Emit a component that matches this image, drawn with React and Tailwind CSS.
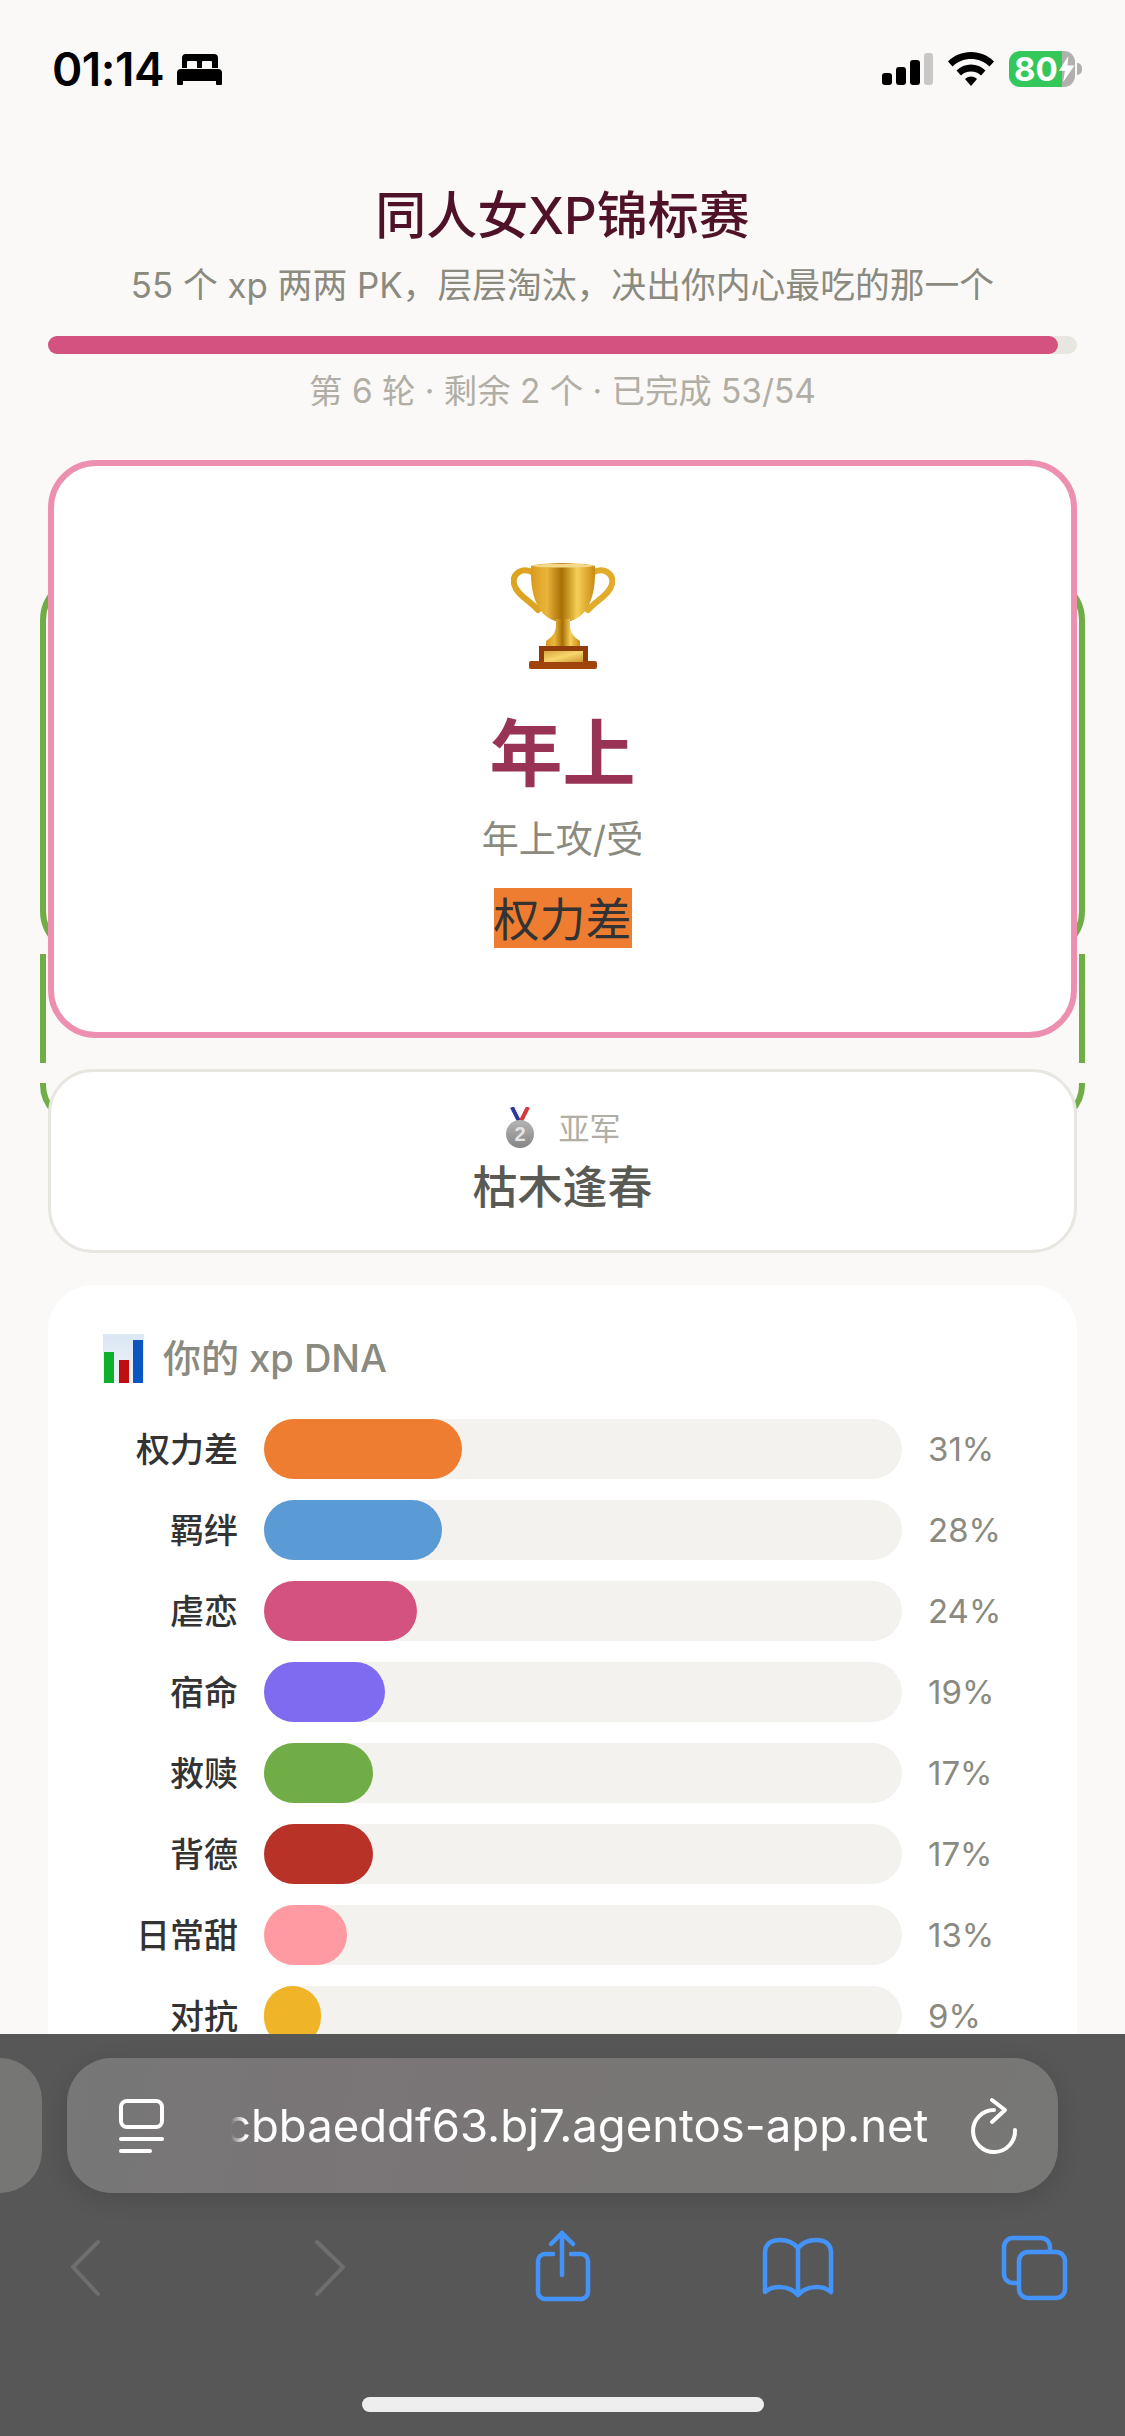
import React from 'react';

const bars = [
  { name: '权力差', pct: '31%', width: 'w-[198px]', color: 'bg-[#ef7d31]' },
  { name: '羁绊', pct: '28%', width: 'w-[178px]', color: 'bg-[#5b9bd5]' },
  { name: '虐恋', pct: '24%', width: 'w-[153px]', color: 'bg-[#d4527f]' },
  { name: '宿命', pct: '19%', width: 'w-[121px]', color: 'bg-[#7e6bf0]' },
  { name: '救赎', pct: '17%', width: 'w-[109px]', color: 'bg-[#70ad47]' },
  { name: '背德', pct: '17%', width: 'w-[109px]', color: 'bg-[#b83227]' },
  { name: '日常甜', pct: '13%', width: 'w-[83px]', color: 'bg-[#ff9aa2]' },
  { name: '对抗', pct: '9%', width: 'w-[57px]', color: 'bg-[#f0b429]' },
];

const BedIcon = () => (
  <svg width="45" height="31" viewBox="0 0 45 31" fill="#000">
    <path fillRule="evenodd" d="M8 0H37a4 4 0 0 1 4 4V14H5V4a4 4 0 0 1 3-4ZM10 8v6h10V8a1 1 0 0 0-1-1H11a1 1 0 0 0-1 1ZM25 8v6h10V8a1 1 0 0 0-1-1H26a1 1 0 0 0-1 1Z" />
    <path d="M4 15H41a4 4 0 0 1 4 4V27H0V19a4 4 0 0 1 4-4Z" />
    <rect x="0" y="26" width="6" height="5" rx="1" />
    <rect x="39" y="26" width="6" height="5" rx="1" />
  </svg>
);

const StatusIcons = () => (
  <div className="flex items-center gap-[15px]">
    <svg width="51" height="32" viewBox="0 0 51 32">
      <rect x="0" y="20" width="10" height="12" rx="3" fill="#000" />
      <rect x="14" y="14" width="10" height="18" rx="3" fill="#000" />
      <rect x="28" y="7" width="10" height="25" rx="3" fill="#000" />
      <rect x="42" y="0" width="9" height="32" rx="3" fill="#c8c8c6" />
    </svg>
    <svg width="46" height="34" viewBox="0 0 46 34">
      <path d="M23 0C14 0 6 3.500 0 9.500l4.500 5C9.500 9.500 16 7 23 7s13.500 2.500 18.500 7.500l4.500-5C40 3.500 32 0 23 0Z" fill="#000" />
      <path d="M23 12.500c-5.500 0-10.500 2-14.500 6l4.500 5c2.500-2.500 6-4 10-4s7.500 1.500 10 4l4.500-5c-4-4-9-6-14.500-6Z" fill="#000" />
      <path d="M23 24.500c-2.500 0-4.500 1-6 2.500l6 7 6-7c-1.500-1.500-3.500-2.500-6-2.500Z" fill="#000" />
    </svg>
    <div className="flex items-center gap-[2px]">
      <div className="flex h-[36px] w-[66px] items-center rounded-[11px] bg-[linear-gradient(90deg,#34c759_80%,#b0b0ae_80%)] pl-[5px] text-[33px] leading-none font-bold text-white">
        80
        <svg width="18" height="30" viewBox="0 0 20 30" fill="#fff">
          <path d="M12 0 1 17h7L6 30 19 11h-8Z" />
        </svg>
      </div>
      <div className="h-[12px] w-[5px] rounded-r-full bg-[#b0b0ae]" />
    </div>
  </div>
);

const Trophy = () => (
  <svg width="104" height="106" viewBox="0 0 104 106" fill="none">
    <defs>
      <linearGradient id="cup" x1="0" x2="1" y1="0" y2="0">
        <stop offset="0" stopColor="#d99a1c" />
        <stop offset="0.25" stopColor="#e9b53c" />
        <stop offset="0.48" stopColor="#a86e04" />
        <stop offset="0.72" stopColor="#f6cf56" />
        <stop offset="1" stopColor="#c98a12" />
      </linearGradient>
      <linearGradient id="plate" x1="0" x2="1" y1="0" y2="1">
        <stop offset="0" stopColor="#d8a53f" />
        <stop offset="0.5" stopColor="#f8d76d" />
        <stop offset="1" stopColor="#c99432" />
      </linearGradient>
    </defs>
    <path d="M23 10C11 3 1 11 3 21 5 31 18 37 27 47" stroke="#dca421" strokeWidth="6" strokeLinecap="round" />
    <path d="M81 10C93 3 103 11 101 21 99 31 86 37 77 47" stroke="#e2ab2a" strokeWidth="6" strokeLinecap="round" />
    <path d="M20 3C30-1 74-1 84 3 85 32 78 52 60 58H44C26 52 19 32 20 3Z" fill="url(#cup)" />
    <path d="M20 3C30 0 74 0 84 3 74 5 30 5 20 3Z" fill="#f4d98a" />
    <path d="M45 56H59V62C59 70 63 74 69 78V85H35V78C41 74 45 70 45 62Z" fill="url(#cup)" />
    <rect x="28" y="83" width="49" height="18" fill="#8f3c0a" />
    <rect x="18" y="98" width="68" height="8" rx="2" fill="#a1440c" />
    <rect x="33" y="88" width="39" height="11" fill="url(#plate)" />
  </svg>
);

const Medal = () => (
  <svg width="30" height="42" viewBox="0 0 30 42">
    <defs>
      <linearGradient id="silver" x1="0" x2="0" y1="0" y2="1">
        <stop offset="0" stopColor="#b5b5b5" />
        <stop offset="1" stopColor="#858585" />
      </linearGradient>
    </defs>
    <path d="M7 0 14 14" stroke="#2a3a9c" strokeWidth="4" />
    <path d="M11 0 16 10" stroke="#f4f4f4" strokeWidth="3" />
    <path d="M23 0 16 14" stroke="#d33a3a" strokeWidth="4" />
    <circle cx="15" cy="27" r="14" fill="url(#silver)" />
    <text x="15" y="34" textAnchor="middle" fontSize="20" fontWeight="700" fill="#e4e4e4" fontFamily="Liberation Sans, sans-serif">2</text>
  </svg>
);

const ChartIcon = () => (
  <div className="flex h-[49px] w-[41px] items-end justify-between bg-[linear-gradient(180deg,#dbe7f4,#eef3f9)] px-[1px]">
    <div className="h-[31px] w-[10px] bg-[#0db02b]" />
    <div className="h-[23px] w-[10px] bg-[#c00d0d]" />
    <div className="h-[43px] w-[10px] bg-[#0b55c0]" />
  </div>
);

const TabListIcon = () => (
  <svg width="45" height="54" viewBox="0 0 45 54" fill="none" stroke="#fff" strokeWidth="4" strokeLinecap="round">
    <rect x="2" y="2" width="41" height="26" rx="6" />
    <path d="M2 40H43" />
    <path d="M2 52H31" />
  </svg>
);

const ReloadIcon = () => (
  <svg width="50" height="58" viewBox="0 0 50 58" fill="none" stroke="#fff" strokeWidth="4" strokeLinecap="round" strokeLinejoin="round">
    <path d="M24 13A21 21 0 1 0 45 33" />
    <path d="M22 3 35 13 22 25" />
  </svg>
);

const navIcon = 'h-[76px] w-[72px]';

const BottomBar = () => (
  <div className="absolute inset-x-0 bottom-0 z-20 h-[402px] bg-[#575757] pt-[24px]">
    <div className="flex items-center gap-[25px]">
      <div className="h-[135px] w-[42px] rounded-r-[42px] bg-[#767674]" />
      <div className="flex h-[135px] w-[991px] items-center rounded-[45px] bg-[linear-gradient(100deg,#777777,#7a7576_30%,#777775)] pr-[38px] pl-[52px] shadow-[0_6px_24px_rgba(0,0,0,0.12)]">
        <TabListIcon />
        <div className="ml-[61px] w-[702px] overflow-hidden text-right text-[45.5px] leading-[60px] whitespace-nowrap text-white [mask-image:linear-gradient(90deg,transparent_6px,#000_20px)]">
          cbbaeddf63.bj7.agentos-app.net
        </div>
        <div className="ml-[43px]">
          <ReloadIcon />
        </div>
      </div>
    </div>
    <div className="mt-[35px] flex justify-between pr-[55px] pl-[54px]">
      <svg className={navIcon} viewBox="0 0 72 76" fill="none" stroke="#6e6e6e" strokeWidth="4" strokeLinecap="round" strokeLinejoin="round">
        <path d="M44 14 19 39 44 66" />
      </svg>
      <svg className={navIcon} viewBox="0 0 72 76" fill="none" stroke="#6e6e6e" strokeWidth="4" strokeLinecap="round" strokeLinejoin="round">
        <path d="M27 14 53 39 27 66" />
      </svg>
      <svg className={navIcon} viewBox="0 0 72 76" fill="none" stroke="#4493f8" strokeWidth="4.500" strokeLinecap="round" strokeLinejoin="round">
        <path d="M27 26H19a7 7 0 0 0-7 7V64a7 7 0 0 0 7 7H55a7 7 0 0 0 7-7V33a7 7 0 0 0-7-7H45" />
        <path d="M36 47V5" />
        <path d="M25 16 36 5 47 16" />
      </svg>
      <svg className={navIcon} viewBox="0 0 72 76" fill="none" stroke="#4493f8" strokeWidth="4.500" strokeLinecap="round" strokeLinejoin="round">
        <path d="M36 20C31 14 24 12 18 12 8 12 3 17 3 25V64C10 58 26 56 36 67 46 56 62 58 69 64V25C69 17 64 12 54 12 48 12 41 14 36 20V67" />
      </svg>
      <svg className={navIcon} viewBox="0 0 72 76" fill="none" stroke="#4493f8" strokeWidth="4.500" strokeLinecap="round" strokeLinejoin="round">
        <path d="M19 55H15a9 9 0 0 1-9-9V19a9 9 0 0 1 9-9H43a9 9 0 0 1 9 9V23" />
        <rect x="21" y="24" width="46" height="46" rx="9" />
      </svg>
    </div>
    <div className="mt-[93px] flex justify-center">
      <div className="h-[15px] w-[402px] rounded-full bg-[#eeeeee]" />
    </div>
  </div>
);

const App = () => {
  return (
    <div className="relative h-[2436px] w-[1125px] overflow-hidden bg-[#faf9f7] [font-family:Inter,'Noto_Sans_CJK_SC',sans-serif]">
      {/* previous match cards showing behind the result */}
      <div className="absolute top-[575px] left-[40px] h-[381px] w-[1045px] rounded-[45px] border-[6px] border-[#70ad47]" />
      <div className="absolute top-[954px] left-[40px] h-[109px] w-[1045px] border-x-[6px] border-[#70ad47]" />
      <div className="absolute top-[1083px] left-[40px] h-[42px] w-[1045px] rounded-b-[40px] border-x-[6px] border-b-[6px] border-[#70ad47]" />

      <div className="flex h-[138px] items-center justify-between pr-[43px] pl-[52px]">
        <div className="flex items-center gap-[13px] text-[46px] leading-none font-semibold tracking-[-0.5px] text-black">
          01:14
          <BedIcon />
        </div>
        <StatusIcons />
      </div>

      <div className="relative z-10 px-[48px]">
        <h1 className="mt-[48px] text-center text-[51px] leading-[60px] font-medium text-[#4f1228]">同人女XP锦标赛</h1>
        <p className="mt-[16px] text-center text-[34.8px] leading-[46px] text-[#8a8a80]">
          55 个 xp 两两 PK，层层淘汰，决出你内心最吃的那一个
        </p>
        <div className="mt-[28px] h-[18px] rounded-full bg-[#e8e6e0]">
          <div className="h-full w-[1010px] rounded-full bg-[#d4527f]" />
        </div>
        <p className="mt-[17px] text-center text-[33.4px] leading-[40px] text-[#b0aea5]">第 6 轮 · 剩余 2 个 · 已完成 53/54</p>

        <div className="mt-[49px] flex h-[578px] flex-col items-center rounded-[48px] border-[6px] border-[#ec8fb0] bg-white pt-[97px]">
          <Trophy />
          <div className="mt-[43px] text-[73px] leading-[84px] font-bold text-[#993355]">年上</div>
          <div className="mt-[20px] text-[37px] leading-[48px] text-[#8a8a80]">年上攻/受</div>
          <div className="mt-[24px] h-[60px] bg-[#ef7d31] text-[46px] leading-[62px] text-[#333333]">权力差</div>
        </div>

        <div className="mt-[31px] flex h-[184px] flex-col items-center rounded-[45px] border-[3px] border-[#e8e6e0] bg-white pt-[33px]">
          <div className="flex h-[46px] items-center gap-[24px]">
            <Medal />
            <span className="text-[31px] leading-none text-[#b0aea5]">亚军</span>
          </div>
          <div className="mt-[7px] text-[45px] leading-[60px] font-medium text-[#5a5a55]">枯木逢春</div>
        </div>

        <div className="mt-[32px] rounded-[45px] bg-white px-[55px] pt-[48px] pb-[48px]">
          <div className="flex h-[50px] items-center gap-[19px] text-[38px] leading-none font-medium text-[#8a8a80]">
            <ChartIcon />
            你的 xp DNA
          </div>
          <div className="mt-[36px] flex flex-col gap-[21px]">
            {bars.map((bar) => (
              <div key={bar.name} className="grid h-[60px] grid-cols-[135px_638px_94px] items-center gap-[26px]">
                <div className="pt-[2px] text-right text-[34px] leading-none font-medium text-[#333333]">{bar.name}</div>
                <div className="h-[60px] rounded-[30px] bg-[#f3f2ee]">
                  <div className={`h-full rounded-[30px] ${bar.width} ${bar.color}`} />
                </div>
                <div className="text-[33px] leading-none text-[#8a8a80]">{bar.pct}</div>
              </div>
            ))}
          </div>
        </div>
      </div>

      <BottomBar />
    </div>
  );
};

export default App;
